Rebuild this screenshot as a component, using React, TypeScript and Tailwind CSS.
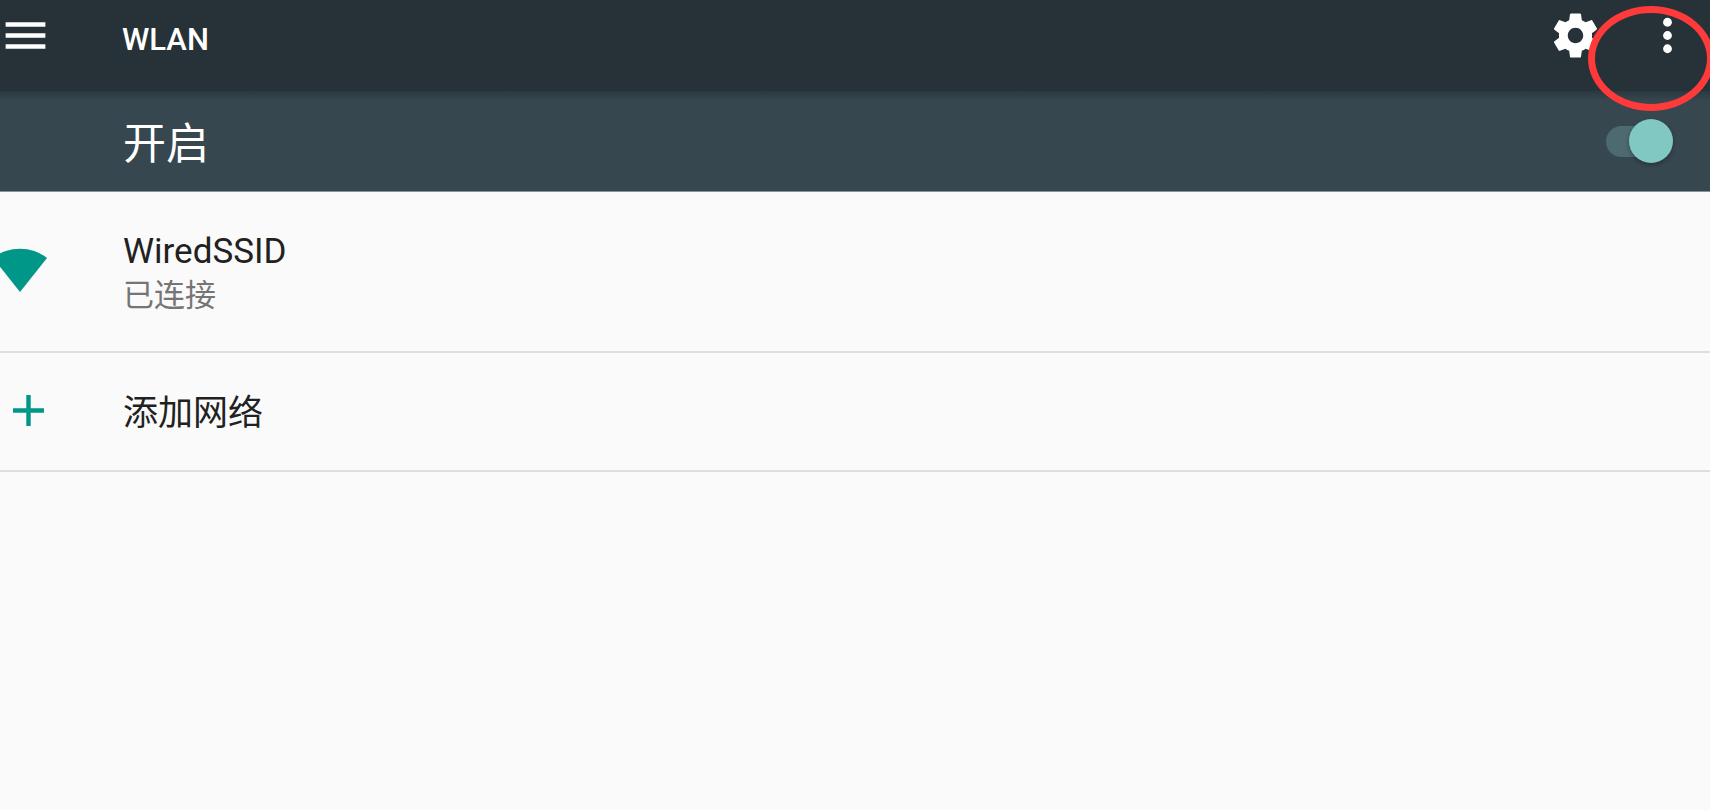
import { useState } from "react";

function MenuIcon() {
    return (
        <svg viewBox="0 0 24 24" className="h-[53px] w-[53px]" fill="currentColor" aria-hidden="true">
            <path d="M3 18h18v-2H3v2zm0-5h18v-2H3v2zm0-7v2h18V6H3z" />
        </svg>
    );
}

function GearIcon() {
    return (
        <svg viewBox="0 0 24 24" className="h-[53px] w-[53px]" fill="currentColor" aria-hidden="true">
            <path d="M19.43 12.98c.04-.32.07-.64.07-.98s-.03-.66-.07-.98l2.11-1.65c.19-.15.24-.42.12-.64l-2-3.46c-.12-.22-.39-.3-.61-.22l-2.49 1c-.52-.4-1.08-.73-1.69-.98l-.38-2.65A.488.488 0 0 0 14 2h-4c-.25 0-.46.18-.49.42l-.38 2.65c-.61.25-1.17.59-1.69.98l-2.49-1c-.23-.09-.49 0-.61.22l-2 3.46c-.13.22-.07.49.12.64l2.11 1.65c-.04.32-.07.65-.07.98s.03.66.07.98l-2.11 1.65c-.19.15-.24.42-.12.64l2 3.46c.12.22.39.3.61.22l2.49-1c.52.4 1.08.73 1.69.98l.38 2.65c.03.24.24.42.49.42h4c.25 0 .46-.18.49-.42l.38-2.65c.61-.25 1.17-.59 1.69-.98l2.49 1c.23.09.49 0 .61-.22l2-3.46c.12-.22.07-.49-.12-.64l-2.11-1.65zM12 15.5c-1.93 0-3.5-1.57-3.5-3.5s1.57-3.5 3.5-3.5 3.5 1.57 3.5 3.5-1.57 3.5-3.5 3.5z" />
        </svg>
    );
}

function MoreIcon() {
    return (
        <svg viewBox="0 0 24 24" className="h-[53px] w-[53px]" fill="currentColor" aria-hidden="true">
            <circle cx="12" cy="6" r="2" />
            <circle cx="12" cy="12" r="2" />
            <circle cx="12" cy="18" r="2" />
        </svg>
    );
}

function WifiIcon() {
    return (
        <svg viewBox="0 0 48 44" className="h-[44px] w-[48px]" fill="currentColor" aria-hidden="true">
            <path d="M20 44L47 10A44 44 0 0 0 -7 10Z" />
        </svg>
    );
}

function PlusIcon() {
    return (
        <svg viewBox="0 0 24 24" className="h-[53px] w-[53px]" fill="currentColor" aria-hidden="true">
            <path d="M19 13h-6v6h-2v-6H5v-2h6V5h2v6h6v2z" />
        </svg>
    );
}

export default function App() {
    const [enabled, setEnabled] = useState(true);

    return (
        <div className="relative min-h-screen overflow-hidden bg-[#fafafa] font-['Roboto','Noto_Sans_CJK_SC',sans-serif] text-[#212121]">
            <header className="flex h-[91px] items-start justify-between bg-[#263238] pt-[9px] pr-4 text-white">
                <div className="flex items-start">
                    <button type="button" aria-label="菜单" className="-ml-px">
                        <MenuIcon />
                    </button>
                    <h1 className="ml-[70px] pt-1 text-[31px] leading-[53px] font-medium">WLAN</h1>
                </div>
                <div className="flex items-center gap-[39px]">
                    <button type="button" aria-label="设置">
                        <GearIcon />
                    </button>
                    <button type="button" aria-label="更多选项">
                        <MoreIcon />
                    </button>
                </div>
            </header>

            <div className="border-b border-[#87939a] bg-[#37474f]">
                <div className="h-[10px] bg-linear-to-b from-[#2b383f] to-[#37474f]" />
                <div className="flex h-[90px] items-start justify-between pr-9 pl-[123px]">
                    <label htmlFor="wlan-switch" className="pt-[11px] text-[43px] leading-[64px] text-white">
                        开启
                    </label>
                    <span className="relative mt-[18px] flex h-11 w-[68px] items-center">
                        <input
                            id="wlan-switch"
                            type="checkbox"
                            role="switch"
                            checked={enabled}
                            onChange={() => setEnabled(!enabled)}
                            className="peer absolute inset-0 z-10 m-0 cursor-pointer opacity-0"
                        />
                        <span className="h-[31px] w-[60px] rounded-full bg-[#78909c]/40 peer-checked:bg-[#4c6a70]" />
                        <span className="absolute left-0 h-11 w-11 rounded-full bg-[#b0bec5] shadow-[0_2px_4px_rgba(0,0,0,0.3)] peer-checked:left-[23px] peer-checked:bg-[#80c8c1]" />
                    </span>
                </div>
            </div>

            <ul>
                <li className="border-b-2 border-[#dedede]">
                    <button type="button" className="flex h-[159px] w-full items-center text-left">
                        <span className="w-[123px] pb-1 text-[#009688]">
                            <WifiIcon />
                        </span>
                        <span className="flex flex-col pt-[5px]">
                            <span className="text-[35px] leading-[44px]">WiredSSID</span>
                            <span className="text-[31px] leading-[44px] text-[#757575]">已连接</span>
                        </span>
                    </button>
                </li>
                <li className="border-b-2 border-[#dedede]">
                    <button type="button" className="flex h-[117px] w-full items-center text-left">
                        <span className="w-[123px] pb-[2px] pl-[2px] text-[#009688]">
                            <PlusIcon />
                        </span>
                        <span className="pt-[5px] text-[35px] leading-[44px]">添加网络</span>
                    </button>
                </li>
            </ul>

            {/* highlight around the overflow menu */}
            <div className="pointer-events-none absolute top-[6px] -right-1 h-[105px] w-[126px] rounded-[50%] border-[7px] border-[#ff3a3a]" />
        </div>
    );
}
